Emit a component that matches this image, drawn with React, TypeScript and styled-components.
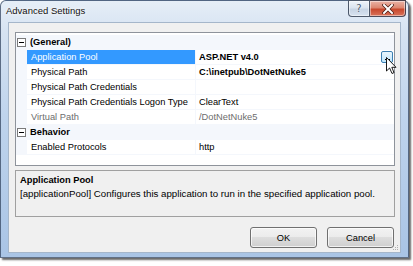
import React from "react";
import styled, { createGlobalStyle } from "styled-components";

const GlobalStyles = createGlobalStyle`
  * {
    margin: 0;
    padding: 0;
    box-sizing: border-box;
  }
  html, body {
    background: #ffffff;
    font-family: "Liberation Sans", Arial, sans-serif;
    font-size: 9.3px;
    color: #000;
  }
`;

const Page = styled.div`
  width: 413px;
  height: 266px;
  position: relative;
`;

const Window = styled.div`
  position: relative;
  width: 409px;
  height: 258px;
  display: flex;
  flex-direction: column;
  border: 1px solid rgba(52, 70, 96, 0.75);
  border-radius: 6px 6px 0 0;
  background: linear-gradient(to bottom, #e6eef7 0%, #d6e3f2 12%, #bfd4ed 45%, #a9c4e5 100%);
  box-shadow: 2px 2px 2px rgba(0, 0, 0, 0.6);
`;

const TitleBar = styled.div`
  height: 21px;
  display: flex;
  align-items: flex-start;
  justify-content: space-between;
  padding-left: 5px;
`;

const Title = styled.div`
  line-height: 20px;
  font-size: 9.5px;
  color: #111;
  text-shadow: 0 0 6px #ffffff, 0 0 3px #ffffff;
`;

const CaptionButtons = styled.div`
  display: flex;
  margin-right: 2px;
  margin-top: -1px;
`;

const CaptionButton = styled.div<{ $close?: boolean }>`
  height: 17px;
  width: ${(p) => (p.$close ? "36px" : "22px")};
  display: flex;
  align-items: center;
  justify-content: center;
  border: 1px solid rgba(40, 52, 72, 0.8);
  border-left-width: ${(p) => (p.$close ? "0" : "1px")};
  border-radius: ${(p) => (p.$close ? "0 0 4px 0" : "0 0 0 4px")};
  background: ${(p) =>
    p.$close
      ? "linear-gradient(to bottom, #eab3a6 0%, #dc8670 45%, #c8482d 55%, #d9735a 100%)"
      : "linear-gradient(to bottom, #eef3f9 0%, #dbe4ef 45%, #c7d4e4 55%, #d8e3f0 100%)"};
  box-shadow: inset 0 0 0 1px rgba(255, 255, 255, 0.45);
  color: #4a5a70;
  font-family: "DejaVu Sans", sans-serif;
  font-size: 10px;
  text-shadow: 0 0 2px #fff;
`;

const Client = styled.div`
  position: relative;
  flex: 1;
  margin: 0 7px 4px 7px;
  background: #f0f0f0;
  border: 1px solid #a5b6ca;
  display: flex;
  flex-direction: column;
  padding: 9px 5px 4px 6px;
`;

const Grid = styled.div`
  height: 134px;
  border: 1px solid #8e939b;
  background: #ffffff;
  padding-top: 2px;
  display: flex;
  flex-direction: column;
`;

const Row = styled.div<{ $category?: boolean }>`
  height: 15px;
  display: flex;
  border-bottom: 1px solid #f4f7fc;
  background: ${(p) => (p.$category ? "#f4f7fc" : "#ffffff")};
`;

const Gutter = styled.div`
  width: 11px;
  flex: none;
  background: #f4f7fc;
  display: flex;
  align-items: center;
  justify-content: center;
`;

const CategoryLabel = styled.div`
  font-weight: bold;
  line-height: 14px;
  padding-left: 3px;
`;

const LabelCell = styled.div<{ $selected?: boolean; $disabled?: boolean }>`
  width: 169px;
  flex: none;
  line-height: 14px;
  padding-left: 4px;
  white-space: nowrap;
  border-right: 1px solid #f4f7fc;
  background: ${(p) => (p.$selected ? "#3399ff" : "transparent")};
  color: ${(p) => (p.$selected ? "#ffffff" : p.$disabled ? "#6d6d6d" : "#000")};
`;

const ValueCell = styled.div<{ $bold?: boolean; $disabled?: boolean }>`
  flex: 1;
  display: flex;
  align-items: center;
  justify-content: space-between;
  line-height: 14px;
  padding-left: 3px;
  padding-right: 1px;
  white-space: nowrap;
  font-weight: ${(p) => (p.$bold ? "bold" : "normal")};
  color: ${(p) => (p.$disabled ? "#6d6d6d" : "#000")};
`;

const EllipsisButton = styled.div`
  width: 12px;
  height: 12px;
  border: 1px solid #3c7fb1;
  border-radius: 2px;
  background: linear-gradient(to bottom, #eaf6fd, #bee6fd);
  display: flex;
  align-items: flex-end;
  justify-content: center;
  gap: 1px;
  padding-bottom: 2px;
`;

const Dot = styled.span`
  width: 1px;
  height: 1px;
  background: #000;
`;

const Description = styled.div`
  margin-top: 4px;
  height: 47px;
  border: 1px solid #a0a0a0;
  background: #f0f0f0;
  padding: 2px 4px;
  line-height: 14px;
`;

const DescTitle = styled.div`
  font-weight: bold;
`;

const DescText = styled.div`
  font-size: 9.7px;
  white-space: nowrap;
`;

const ButtonRow = styled.div`
  margin-top: 10px;
  display: flex;
  justify-content: flex-end;
  gap: 10px;
  padding-right: 1px;
`;

const DialogButton = styled.div`
  width: 67px;
  height: 21px;
  border: 1px solid #707070;
  border-radius: 3px;
  background: linear-gradient(to bottom, #f2f2f2 0%, #ebebeb 50%, #dddddd 50%, #cfcfcf 100%);
  box-shadow: inset 0 0 0 1px rgba(255, 255, 255, 0.7);
  display: flex;
  align-items: center;
  justify-content: center;
`;

const Grip = styled.svg`
  position: absolute;
  right: 1px;
  bottom: 1px;
`;

const Cursor = styled.svg`
  position: absolute;
  left: 385px;
  top: 56px;
`;

type Item = {
  category?: boolean;
  label: string;
  value?: string;
  bold?: boolean;
  selected?: boolean;
  disabled?: boolean;
  ellipsis?: boolean;
};

const items: Item[] = [
  { category: true, label: "(General)" },
  { label: "Application Pool", value: "ASP.NET v4.0", bold: true, selected: true, ellipsis: true },
  { label: "Physical Path", value: "C:\\inetpub\\DotNetNuke5", bold: true },
  { label: "Physical Path Credentials", value: "" },
  { label: "Physical Path Credentials Logon Type", value: "ClearText" },
  { label: "Virtual Path", value: "/DotNetNuke5", disabled: true },
  { category: true, label: "Behavior" },
  { label: "Enabled Protocols", value: "http" },
];

const MinusBox = () => (
  <svg width="9" height="9" viewBox="0 0 9 9">
    <rect x="0.5" y="0.5" width="8" height="8" fill="#fff" stroke="#7a7a7a" />
    <line x1="2" y1="4.5" x2="7" y2="4.5" stroke="#000" />
  </svg>
);

const AdvancedSettings = () => {
  return (
    <>
      <GlobalStyles />
      <Page>
        <Window>
          <TitleBar>
            <Title>Advanced Settings</Title>
            <CaptionButtons>
              <CaptionButton>?</CaptionButton>
              <CaptionButton $close>
                <svg width="12" height="10" viewBox="0 0 12 10">
                  <path
                    d="M2 1 L10 9 M10 1 L2 9"
                    stroke="#4a1b12"
                    strokeWidth="3.4"
                    strokeLinecap="square"
                  />
                  <path
                    d="M2 1 L10 9 M10 1 L2 9"
                    stroke="#ffffff"
                    strokeWidth="2"
                    strokeLinecap="square"
                  />
                </svg>
              </CaptionButton>
            </CaptionButtons>
          </TitleBar>
          <Client>
            <Grid>
              {items.map((it) =>
                it.category ? (
                  <Row key={it.label} $category>
                    <Gutter>
                      <MinusBox />
                    </Gutter>
                    <CategoryLabel>{it.label}</CategoryLabel>
                  </Row>
                ) : (
                  <Row key={it.label}>
                    <Gutter />
                    <LabelCell $selected={it.selected} $disabled={it.disabled}>
                      {it.label}
                    </LabelCell>
                    <ValueCell $bold={it.bold} $disabled={it.disabled}>
                      <span>{it.value}</span>
                      {it.ellipsis && (
                        <EllipsisButton>
                          <Dot />
                          <Dot />
                          <Dot />
                        </EllipsisButton>
                      )}
                    </ValueCell>
                  </Row>
                )
              )}
            </Grid>
            <Description>
              <DescTitle>Application Pool</DescTitle>
              <DescText>
                [applicationPool] Configures this application to run in the specified application pool.
              </DescText>
            </Description>
            <ButtonRow>
              <DialogButton>OK</DialogButton>
              <DialogButton>Cancel</DialogButton>
            </ButtonRow>
            <Grip width="6" height="6" viewBox="0 0 6 6">
              <rect x="4" y="0" width="1" height="1" fill="#b0b0b0" />
              <rect x="2" y="2" width="1" height="1" fill="#b0b0b0" />
              <rect x="4" y="2" width="1" height="1" fill="#b0b0b0" />
              <rect x="0" y="4" width="1" height="1" fill="#b0b0b0" />
              <rect x="2" y="4" width="1" height="1" fill="#b0b0b0" />
              <rect x="4" y="4" width="1" height="1" fill="#b0b0b0" />
            </Grip>
          </Client>
          <Cursor width="12" height="18" viewBox="0 0 12 18">
            <path
              d="M0.5 0.5 L0.5 14 L3.6 11 L6 16.5 L8 15.6 L5.8 10.3 L10 10.3 Z"
              fill="#ffffff"
              stroke="#000"
              strokeWidth="0.9"
              strokeLinejoin="round"
            />
          </Cursor>
        </Window>
      </Page>
    </>
  );
};

export default AdvancedSettings;
